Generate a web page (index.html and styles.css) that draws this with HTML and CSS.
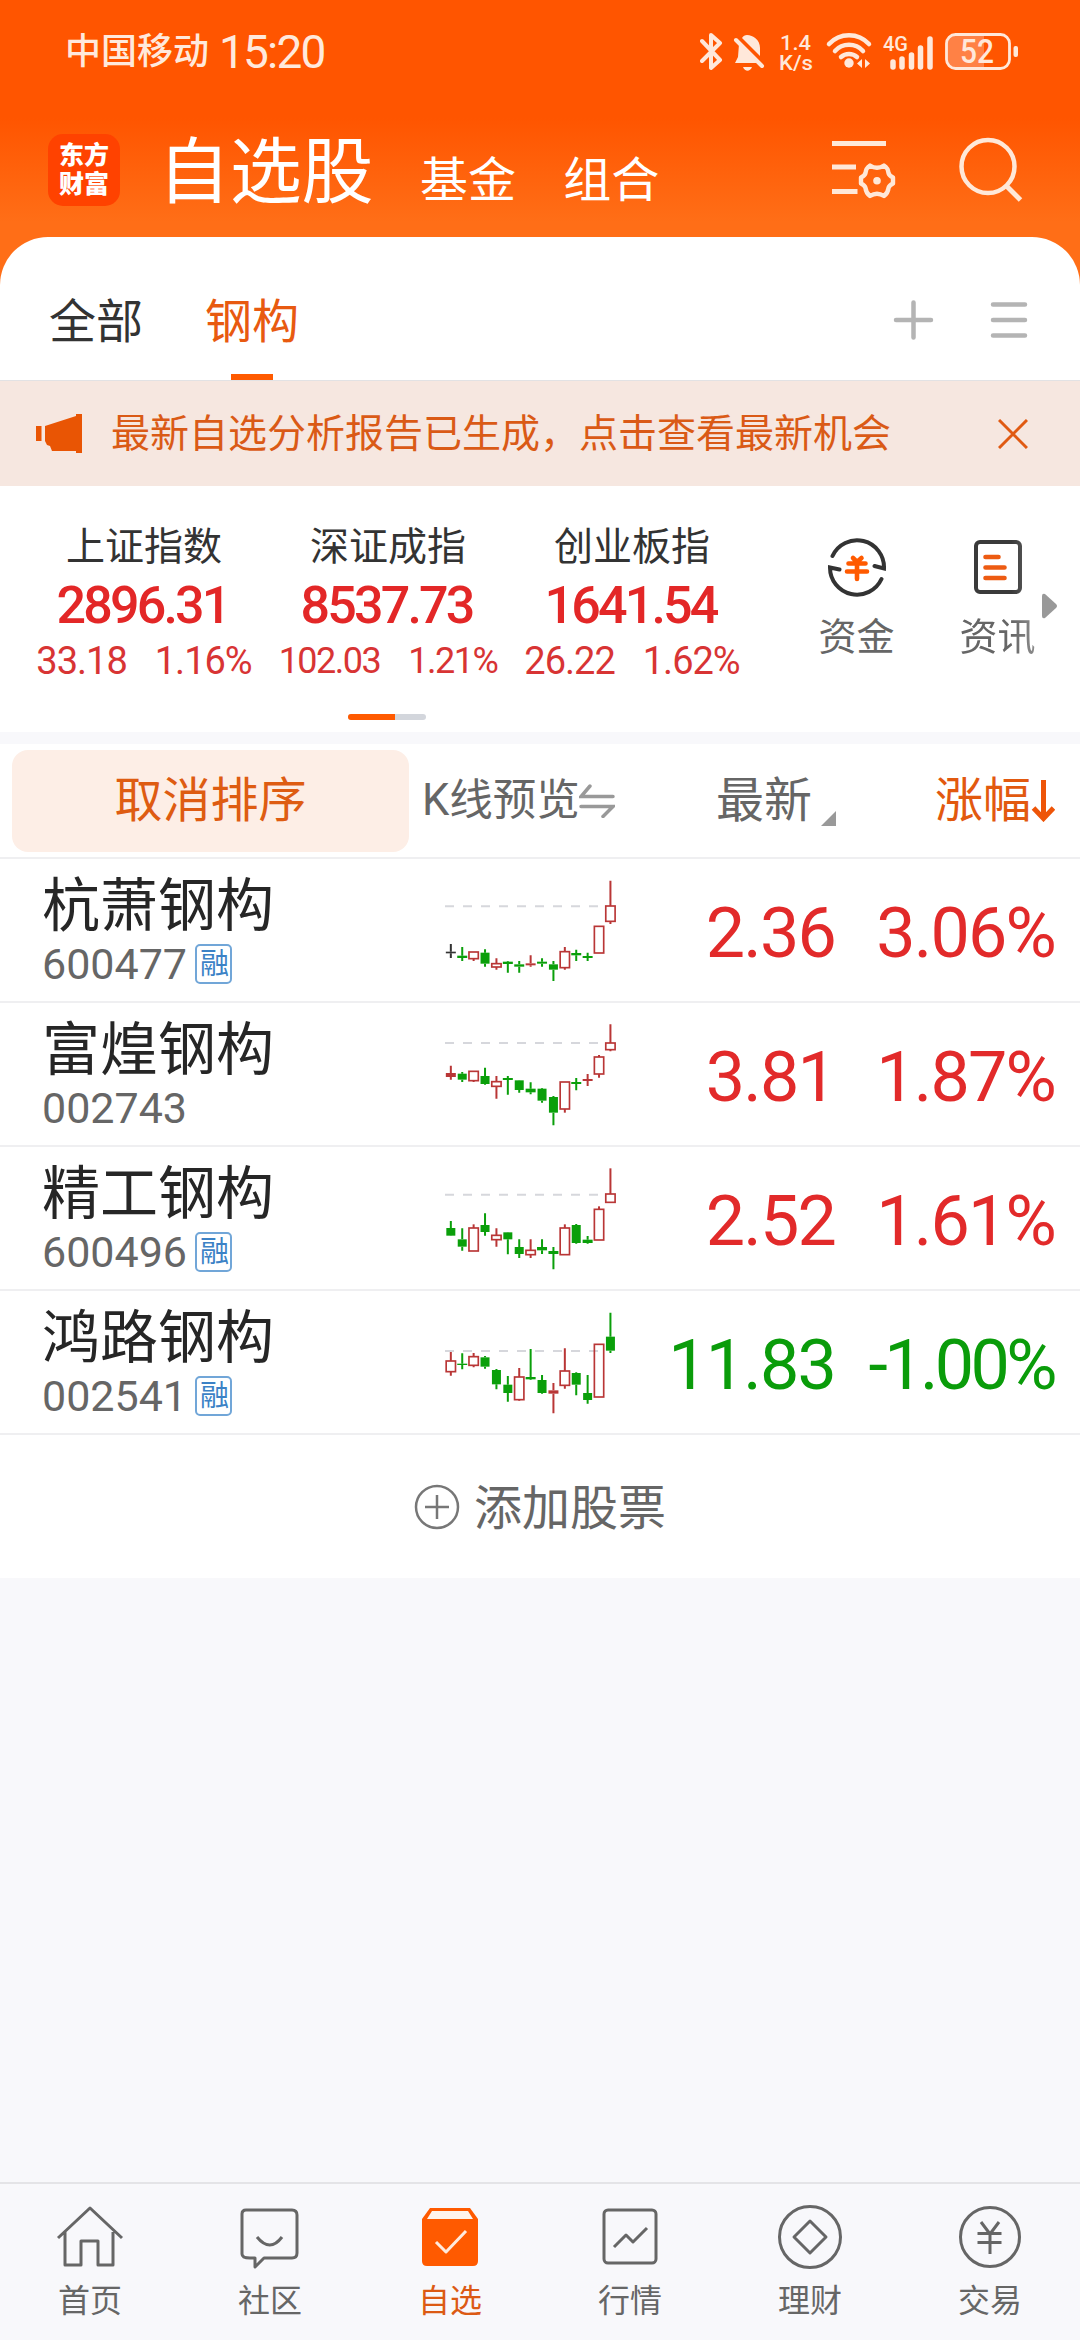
FILE: index.html
```html
<!DOCTYPE html>
<html lang="zh-CN">
<head>
<meta charset="utf-8">
<title>自选股</title>
<link rel="stylesheet" href="styles.css">
</head>
<body>
<div class="app">
  <header class="top">
    <div class="status">
      <span class="carrier">中国移动</span><span class="time">15:20</span>
      <svg class="status-icons" width="330" height="50" viewBox="0 0 330 50" fill="none" stroke="#ffe8da" stroke-linecap="round" stroke-linejoin="round">
        <path d="M2 15 20 34 11 42V9l9 8L2 35" stroke-width="4"/>
        <path d="M47 9c6 0 13 5 13 13v8L42 12c1-2 3-3 5-3ZM39 18 57 37H35l3-6Z M43 41h9c-2 5-7 5-9 0Z" fill="#ffe8da" stroke="none"/>
        <path d="M36 14 62 40" stroke-width="4"/>
        <path d="M129 18a27 27 0 0 1 40 0M135 25a19 19 0 0 1 28 0M141 31a12 12 0 0 1 16 0" stroke-width="4.500"/>
        <circle cx="149" cy="37" r="4.700" fill="#ffe8da" stroke="none"/>
        <path d="M162 33v9l-5-4.500ZM165 33v9l5-4.500Z" fill="#ffe8da" stroke="none"/>
        <path d="M193 36v5M202 33v8M211.500 29v12M220.500 22v19M230 13v28" stroke-width="5.500"/>
        <path d="M255 9h29v32h-29a8 8 0 0 1-8-8V17a8 8 0 0 1 8-8Z" fill="#ff8145" stroke="none"/>
        <rect x="246.500" y="8.500" width="63" height="34" rx="9" stroke-width="2.800"/>
        <rect x="313.500" y="20" width="4.500" height="11" rx="2" fill="#ffe8da" stroke="none"/>
        <g class="status-text">
          <text x="80" y="24" textLength="31" lengthAdjust="spacingAndGlyphs">1.4</text>
          <text x="79" y="44" textLength="34" lengthAdjust="spacingAndGlyphs">K/s</text>
          <text x="183" y="25" textLength="25" lengthAdjust="spacingAndGlyphs">4G</text>
          <text class="battery" x="260" y="37" textLength="34" lengthAdjust="spacingAndGlyphs">52</text>
        </g>
      </svg>
    </div>
    <div class="titlebar">
      <div class="logo">东方<br>财富</div>
      <nav class="titles"><span class="title-on">自选股</span><span>基金</span><span>组合</span></nav>
      <svg class="title-icons" width="200" height="70" viewBox="0 0 200 70" fill="none" stroke="#ffe8d8" stroke-width="5">
        <path d="M11 15.500h54M11 39h24M11 63.500h25.500"/>
        <path stroke-width="4.400" stroke-linejoin="round" d="M49 37.500Q56 42 63 37.500Q67 40 67.500 45Q68 47.500 72 49.500V55.500Q68 57.500 67.500 60Q67 65 63 68Q56 63.500 49 68Q45 65 44.500 60Q44 57.500 40 55.500V49.500Q44 47.500 44.500 45Q45 40 49 37.500Z"/>
        <circle cx="56" cy="52.700" r="3.800" fill="#ffe8d8" stroke="none"/>
        <circle cx="167" cy="38.500" r="26.500" stroke-width="4.500"/>
        <path d="m185.500 58 14 14"/>
      </svg>
    </div>
  </header>

  <section class="sheet">
    <div class="tabs">
      <span class="tab">全部</span><span class="tab tab-on">钢构</span>
      <svg class="tab-icons" width="140" height="44" viewBox="0 0 140 44" stroke="#b4b4b4" stroke-width="4.500" stroke-linecap="round"><path d="M5 22h35M22.500 4.500v35M102 6.500h32M102 22h32M102 37.500h32"/></svg>
    </div>
    <div class="banner">
      <svg width="48" height="40" viewBox="0 0 48 40" fill="#e95504"><path d="M0 12h5.500v15H0zM9 12 40 2V0h6v39h-6v-2H16l-2-5-3-1-2-4z"/></svg>
      <span class="banner-text">最新自选分析报告已生成，点击查看最新机会</span>
      <svg class="close" width="30" height="30" viewBox="0 0 30 30" stroke="#e05a12" stroke-width="3"><path d="M1 1 29 29M29 1 1 29"/></svg>
    </div>
    <div class="indices">
      <div class="index"><b>上证指数</b><strong>2896.31</strong><p><span>33.18</span><span>1.16%</span></p></div>
      <div class="index"><b>深证成指</b><strong>8537.73</strong><p class="small"><span>102.03</span><span>1.21%</span></p></div>
      <div class="index"><b>创业板指</b><strong>1641.54</strong><p><span>26.22</span><span>1.62%</span></p></div>
      <div class="tool">
        <svg width="60" height="60" viewBox="0 0 60 60" fill="none" stroke="#333" stroke-width="4" stroke-linecap="round"><path d="M5.500 19A27 27 0 0 1 57 31.500L47.500 29M54.500 42A27 27 0 0 1 3 30.500L12.500 32.500"/><path d="m26 21 4 4 4.500-4M21.500 26.500h17M20 34.500h20M30 26v16" stroke="#ff5a00" stroke-width="4.600"/></svg>
        <span>资金</span>
      </div>
      <div class="tool fade">
        <svg width="60" height="60" viewBox="0 0 60 60" fill="none" stroke-width="4" stroke-linecap="round"><rect x="8" y="5" width="44" height="50" rx="4" stroke="#3a3a3a"/><path d="M17.500 20h13M17.500 30.500h19M17.500 41h19" stroke="#ed5b12" stroke-width="4.600"/></svg>
        <span>资讯</span>
      </div>
      <svg class="more" width="16" height="26" viewBox="0 0 16 26" fill="#999"><path d="M1 3Q1 0 4 1L15 11q2 2 0 4L4 25q-3 1-3-2Z"/></svg>
    </div>
    <div class="pager"><i></i></div>
  </section>

  <section class="list">
    <div class="head">
      <span class="reset">取消排序</span>
      <span class="kline">K线预览<svg width="36" height="34" viewBox="0 0 36 34" fill="none" stroke="#999" stroke-width="3.500" stroke-linecap="round"><path d="M11 2 2 12.500h32M2 22.500h32L24 32.500"/></svg></span>
      <span class="latest">最新<svg width="15" height="15" viewBox="0 0 15 15" fill="#999"><path d="M15 0v15H0z"/></svg></span>
      <span class="change">涨幅<svg width="24" height="42" viewBox="0 0 24 42" fill="none" stroke="#ee5508" stroke-width="5"><path d="M12.500 0v38M2.500 28 12.500 38.500 22.500 28"/></svg></span>
    </div>
    <div class="row"><div class="stock"><b>杭萧钢构</b><p>600477<em>融</em></p></div><svg class="chart" viewBox="0 0 600 426"></svg><span class="num">2.36</span><span class="num">3.06%</span></div>
    <div class="row"><div class="stock"><b>富煌钢构</b><p>002743</p></div><svg class="chart" viewBox="0 0 600 426"></svg><span class="num">3.81</span><span class="num">1.87%</span></div>
    <div class="row"><div class="stock"><b>精工钢构</b><p>600496<em>融</em></p></div><svg class="chart" viewBox="0 0 600 426"></svg><span class="num">2.52</span><span class="num">1.61%</span></div>
    <div class="row down"><div class="stock"><b>鸿路钢构</b><p>002541<em>融</em></p></div><svg class="chart" viewBox="0 0 600 426"></svg><span class="num">11.83</span><span class="num tight">-1.00%</span></div>
    <div class="add"><svg width="46" height="46" viewBox="0 0 46 46" fill="none" stroke="#777" stroke-width="2.500"><circle cx="23" cy="23" r="21"/><path d="M11 23h24M23 11v24"/></svg><span>添加股票</span></div>
  </section>

  <nav class="nav">
    <a><svg viewBox="0 0 70 70"><path d="M3 36 35 6l32 30M10 30v33h16V39h17v24h15V30"/></svg>首页</a>
    <a><svg viewBox="0 0 70 70"><path d="M11 8h46q5 0 5 5v38q0 5-5 5H29l-9 9v-9h-5q-8 0-8-4V12q0-4 4-4ZM22 35q13 16 25 0"/></svg>社区</a>
    <a class="nav-on"><svg viewBox="0 0 70 70"><path d="M15 6h40l8 11v42q0 5-5 5H12q-5 0-5-5V17Z" fill="#ff5a00" stroke="none"/><path d="M17 9h36l5 8H12Z" fill="#fff4ed" stroke="none"/><path d="M21 40 31 50 51 29" stroke="#ffeadd"/></svg>自选</a>
    <a><svg viewBox="0 0 70 70"><rect x="9" y="8" width="52" height="53" rx="4"/><path d="m19 45 12-12 7 7 14-14"/></svg>行情</a>
    <a><svg viewBox="0 0 70 70"><circle cx="35" cy="35" r="30.500"/><path d="M35 19 51 35 35 51 19 35Z"/></svg>理财</a>
    <a><svg viewBox="0 0 70 70"><circle cx="35" cy="35" r="29.500"/><path d="m26 20 9 12 9-12M22.500 31.500h24M22.500 40.500h24M35 31v21"/></svg>交易</a>
  </nav>
</div>
<script src="charts.js"></script>
</body>
</html>
```
FILE: styles.css
```css
* { box-sizing: border-box; }
body { margin: 0; }
p { margin: 0; }
b, em, i { font-weight: 400; font-style: normal; }
svg { display: block; flex: none; }

.app {
  width: 1080px;
  height: 2340px;
  display: flex;
  flex-direction: column;
  background: #f8f8fb;
  color: #333;
  font-family: Roboto, "Noto Sans CJK SC", sans-serif;
  overflow: hidden;
}

.top {
  height: 286px;
  flex: none;
  background: linear-gradient(#ff5500 0, #ff5500 118px, #ff6e17 222px);
  color: #fff;
}
.status {
  height: 102px;
  padding: 0 50px 0 65px;
  display: flex;
  align-items: center;
  color: #ffe9dc;
}
.carrier { font-size: 36px; line-height: 50px; font-weight: 500; padding-top: 2px; }
.time { font-size: 46px; line-height: 50px; letter-spacing: -1.8px; margin-left: 10px; padding-top: 2px; }
.status-icons { margin-left: auto; }
.status-text { fill: #ffe8da; stroke: none; font-size: 21px; font-weight: 500; }
.battery { font-size: 34px; font-weight: 500; }
.titlebar {
  height: 135px;
  padding: 0 50px 0 48px;
  display: flex;
  align-items: center;
}
.logo {
  width: 72px;
  height: 72px;
  border-radius: 15px;
  background: #ff4200;
  font-size: 25px;
  line-height: 29px;
  font-weight: 900;
  text-align: center;
  padding-top: 7px;
}
.titles {
  display: flex;
  align-items: baseline;
  gap: 47px;
  margin-left: 38px;
  padding-top: 14px;
  font-size: 48px;
  line-height: 80px;
}
.title-on { font-size: 72px; letter-spacing: -.3px; }
.title-icons { margin-left: auto; margin-right: 9px; margin-top: -13px; overflow: visible; }

.sheet {
  height: 495px;
  flex: none;
  margin-top: -49px;
  background: #fff;
  border-radius: 48px 48px 0 0;
}
.tabs {
  height: 144px;
  padding: 26px 52px 0 49px;
  display: flex;
  border-bottom: 1px solid #e2e2e4;
}
.tab { font-size: 47px; line-height: 117px; margin-right: 62px; }
.tab-on {
  color: #e85a10;
  background: linear-gradient(#ff5a00, #ff5a00) center bottom / 42px 6px no-repeat;
}
.tab-icons { margin: 35px -3px 0 auto; }
.banner {
  height: 105px;
  padding: 0 52px 0 36px;
  display: flex;
  align-items: center;
  background: #f6e7e0;
  color: #da5a16;
}
.banner-text { font-size: 39px; line-height: 60px; margin-left: 27px; }
.close { margin-left: auto; }
.indices { height: 226px; display: flex; padding-left: 22px; }
.index {
  width: 244px;
  display: flex;
  flex-direction: column;
  align-items: center;
  padding-top: 31px;
}
.index b { font-size: 39px; line-height: 60px; }
.index strong { font-size: 52px; line-height: 58px; font-weight: 500; letter-spacing: -2.8px; margin-left: -3px; color: #e32727; }
.index p { display: flex; gap: 28px; font-size: 38px; line-height: 52px; letter-spacing: -1px; color: #d83434; }
.index .small { font-size: 36px; letter-spacing: -1.5px; }
.tool {
  width: 141px;
  padding-top: 51px;
  display: flex;
  flex-direction: column;
  align-items: center;
  color: #666;
}
.index + .tool { margin-left: 32px; }
.tool span { font-size: 38px; line-height: 56px; margin-top: 12px; }
.fade { -webkit-mask-image: linear-gradient(90deg, #000 60%, rgba(0,0,0,.55) 90%); mask-image: linear-gradient(90deg, #000 60%, rgba(0,0,0,.55) 90%); }
.more { margin: 107px 0 0 -27px; }
.pager { width: 78px; height: 6px; margin: 2px auto 0 348px; border-radius: 3px; background: #d3d6dc; }
.pager i { display: block; width: 47px; height: 6px; border-radius: 3px 0 0 3px; background: #ff5a00; }

.list { margin-top: 12px; flex: none; background: #fff; }
.head {
  height: 115px;
  display: grid;
  grid-template-columns: 409px 307px 219px 145px;
  border-bottom: 2px solid #efeff1;
  font-size: 48px;
  line-height: 110px;
  color: #666;
}
.reset {
  margin: 6px 0 5px 12px;
  border-radius: 16px;
  background: #fdeee6;
  color: #de5c12;
  text-align: center;
  line-height: 101px;
}
.kline, .latest, .change { display: flex; align-items: center; }
.kline { padding-left: 13px; font-size: 43.500px; }
.kline svg { margin-left: -1px; }
.latest svg { margin: 35px 0 0 9px; }
.change { color: #e2590f; }
.row {
  height: 144px;
  display: grid;
  grid-template-columns: 430px 200px 205px 220px;
  border-bottom: 2px solid #efeff1;
  color: #e22a2a;
}
.down { color: #0a9c0a; }
.stock { padding: 11px 0 0 42px; color: #262626; }
.stock b { display: block; font-size: 58px; line-height: 72px; }
.stock p { display: flex; align-items: center; height: 44px; font-size: 43px; color: #666; }
.stock em {
  width: 37px;
  height: 40px;
  margin-left: 8px;
  border: 2px solid #71a6d8;
  border-radius: 5px;
  font-size: 29px;
  line-height: 37px;
  text-align: center;
  text-indent: 2px;
  color: #3c82c6;
}
.chart { width: 200px; height: 142px; }
.num { font-size: 70px; line-height: 149px; text-align: right; letter-spacing: -1.8px; }
.tight { letter-spacing: -3.6px; padding-right: 1px; }
.add {
  height: 143px;
  display: flex;
  align-items: center;
  justify-content: center;
  gap: 14px;
  font-size: 48px;
  line-height: 60px;
  color: #666;
}
.add span { padding-top: 4px; }

.nav {
  height: 158px;
  flex: none;
  margin-top: auto;
  border-top: 2px solid #e4e4e7;
  display: grid;
  grid-template-columns: repeat(6, 180px);
}
.nav a {
  display: flex;
  flex-direction: column;
  align-items: center;
  padding-top: 18px;
  font-size: 32px;
  line-height: 58px;
  color: #666;
}
.nav svg { width: 70px; height: 70px; fill: none; stroke: #666; stroke-width: 3; stroke-linejoin: round; }
.nav .nav-on { color: #dc5a14; }
```
FILE: charts.js
```js
// Each candle: kind, high, body top, body bottom, low.
// g = falling, r = rising (hollow), R = rising (solid), k = unchanged.
const charts = [
  { dy: 3, last: 139, c: 'k 252 275 280 294|g 261 287 294 303|r 276 276 296 303|g 268 278 311 320|r 295 311 321 329|g 303 305 312 338|g 303 313 320 338|R 286 310 316 320|g 295 305 311 320|g 303 313 329 363|r 261 275 323 329|g 269 279 286 303|g 278 288 294 303|r 199 199 279 279|r 62 138 184 192' },
  { dy: 6, last: 114, c: 'R 182 204 216 224|g 201 206 224 231|r 199 199 227 231|g 188 213 237 239|r 213 230 244 281|g 213 219 225 269|g 225 226 255 263|g 232 251 262 268|g 249 251 287 293|g 273 276 323 361|r 231 231 312 323|g 219 231 237 256|R 207 222 228 243|r 150 156 207 218|r 58 114 134 139' },
  { dy: 9, last: 134, c: 'g 213 234 257 258|g 235 268 290 302|r 223 234 303 303|g 190 225 246 257|r 235 256 269 290|g 246 247 268 313|g 268 291 312 324|r 268 301 314 324|g 268 291 301 312|g 291 303 312 358|r 223 234 314 314|g 222 225 279 281|g 258 269 279 281|r 169 178 270 270|r 55 132 157 157' },
  { dy: 12, last: 168, c: 'r 171 198 230 242|g 175 206 210 223|r 174 185 211 217|g 183 187 215 221|g 222 225 268 283|g 243 269 294 320|r 219 246 314 317|g 162 246 253 255|g 240 255 294 296|R 264 286 296 355|r 160 228 271 281|g 232 234 269 301|g 240 294 315 326|r 148 148 306 306|g 53 125 167 174' }
];
const colors = { g: '#0a9f0a', r: '#b93636', R: '#b93636', k: '#333' };

document.querySelectorAll('.chart').forEach((svg, n) => {
  const { dy, last, c } = charts[n];
  let out = `<path d="M45 ${last}H505" stroke="#d6d7dc" stroke-width="6" stroke-dasharray="27 27"/>`;
  c.split('|').forEach((item, i) => {
    const [kind, ...v] = item.split(' ');
    const [high, top, bottom, low] = v.map(Number);
    const x = 62.5 + 34.2 * i;
    const w = bottom - top < 13 ? 30 : 27;
    out += `<path d="M${x} ${high}V${top}M${x} ${bottom}V${low}" stroke="${colors[kind]}" stroke-width="6"/>`;
    out += kind === 'r'
      ? `<rect x="${x - 14}" y="${top}" width="28" height="${bottom - top}" fill="none" stroke="${colors[kind]}" stroke-width="5"/>`
      : `<rect x="${x - w / 2}" y="${top}" width="${w}" height="${bottom - top}" fill="${colors[kind]}"/>`;
  });
  svg.innerHTML = `<g transform="translate(0 ${dy})">${out}</g>`;
});
```
